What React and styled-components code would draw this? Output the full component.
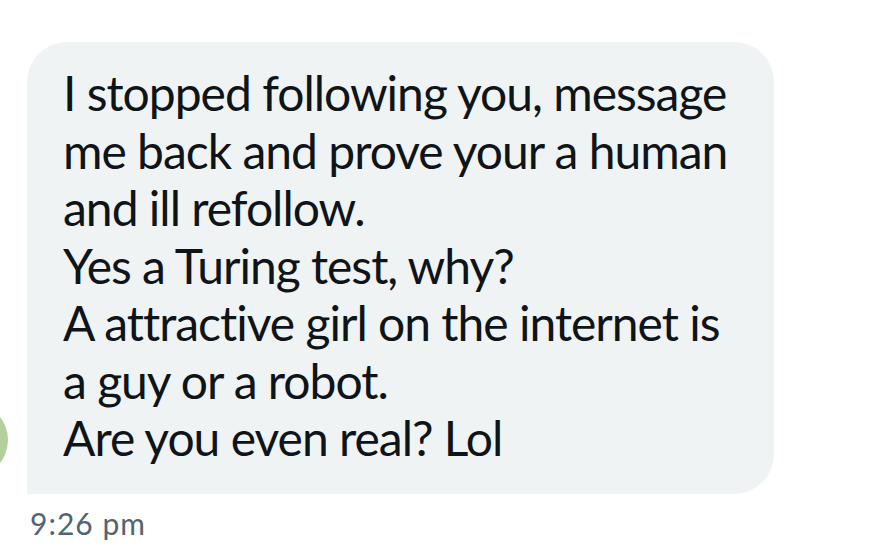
import React from "react";
import styled, { createGlobalStyle } from "styled-components";

const Global = createGlobalStyle`
  html, body { margin: 0; padding: 0; background: #ffffff; }
  body { font-family: Lato, "Liberation Sans", Arial, sans-serif; overflow: hidden; }
`;

const Page = styled.div`
  width: 878px;
  height: 558px;
  position: relative;
  overflow: hidden;
  background: #ffffff;
  padding: 42px 0 0 27px;
  box-sizing: border-box;
  display: flex;
  flex-direction: column;
`;

const Avatar = styled.div`
  position: absolute;
  left: -66px;
  top: 403px;
  width: 74px;
  height: 74px;
  border-radius: 50%;
  background: #b4cf9e;
`;

const Bubble = styled.div`
  width: 747px;
  box-sizing: border-box;
  background: #eff3f4;
  border-radius: 40px 40px 40px 0;
  padding: 22px 20px 27px 36px;
  color: #0f1419;
  font-size: 48px;
  line-height: 57.5px;
  letter-spacing: -1px;
  font-variant-ligatures: none;
`;

const Line = styled.div`
  white-space: nowrap;
`;

const Time = styled.div`
  margin: 13px 0 0 3px;
  color: #536471;
  font-size: 30px;
  line-height: 32px;
  letter-spacing: 1px;
`;

const lines = [
  "I stopped following you, message",
  "me back and prove your a human",
  "and ill refollow.",
  "Yes a Turing test, why?",
  "A attractive girl on the internet is",
  "a guy or a robot.",
  "Are you even real? Lol",
];

export default function App() {
  return (
    <Page>
      <Global />
      <Avatar />
      <Bubble>
        {lines.map((l) => (
          <Line key={l}>{l}</Line>
        ))}
      </Bubble>
      <Time>9:26 pm</Time>
    </Page>
  );
}
